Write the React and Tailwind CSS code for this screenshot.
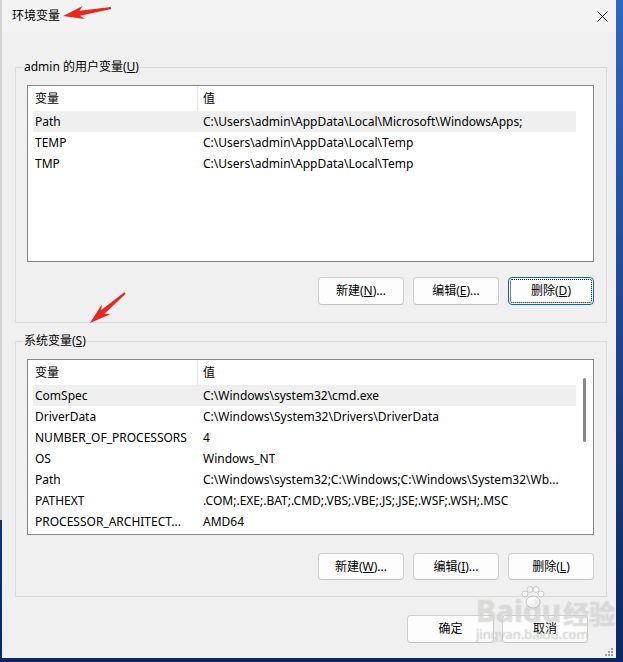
import React from "react";

function arrowPoints(tip, tail, headLen, headW, sw0, sw1) {
  const dx = tip[0] - tail[0];
  const dy = tip[1] - tail[1];
  const len = Math.hypot(dx, dy);
  const ux = dx / len;
  const uy = dy / len;
  const px = -uy;
  const py = ux;
  const bx = tip[0] - ux * headLen;
  const by = tip[1] - uy * headLen;
  const nb = 4;
  const pts = [
    [tip[0], tip[1]],
    [bx + px * headW - ux * nb, by + py * headW - uy * nb],
    [bx + px * sw0, by + py * sw0],
    [tail[0] + px * sw1, tail[1] + py * sw1],
    [tail[0] - px * sw1, tail[1] - py * sw1],
    [bx - px * sw0, by - py * sw0],
    [bx - px * headW - ux * nb, by - py * headW - uy * nb],
  ];
  return pts.map((p) => p[0].toFixed(1) + "," + p[1].toFixed(1)).join(" ");
}

function Btn({ children, focused, w = "w-[86px]", h = "h-[28px]" }) {
  return (
    <div
      className={
        "flex items-center justify-center rounded-[4px] bg-[#fdfdfd] " +
        w +
        " " +
        h +
        (focused
          ? " border border-[#0067c0] outline-1 outline-dotted outline-black outline-offset-[-3px]"
          : " border border-[#d0d0d0] border-b-[#c2c2c2]")
      }
    >
      <span className="leading-none">{children}</span>
    </div>
  );
}

function GroupBox({ legend, children }) {
  return (
    <div className="ml-[13px] w-[592px] h-[256px] border border-[#dcdcdc] flex flex-col">
      <span className="-mt-[9px] ml-[7px] self-start px-[1px] h-[16px] leading-[16px] bg-[#f0f0f0]">
        {legend}
      </span>
      {children}
    </div>
  );
}

function ListView({ rows, height, scroll }) {
  return (
    <div
      className={
        "ml-[11px] w-[567px] border border-[#868686] bg-white flex " + height
      }
    >
      <div className="flex flex-col w-[548px]">
        <div className="flex h-[25px] items-center">
          <div className="w-[169px] h-full flex items-center pl-[7px]">变量</div>
          <div className="w-px h-full bg-[#e5e5e5]" />
          <div className="pl-[5px]">值</div>
        </div>
        <div className="flex flex-col pl-[5px]">
          {rows.map((r, i) => (
            <div
              key={i}
              className={
                "flex h-[21px] items-center w-[543px] " +
                (i === 0 ? "bg-[#efefef]" : "")
              }
            >
              <div className="w-[164px] pl-[2px] whitespace-nowrap overflow-hidden">
                {r[0]}
              </div>
              <div className="pl-[6px] whitespace-nowrap overflow-hidden">
                {r[1]}
              </div>
            </div>
          ))}
        </div>
      </div>
      <div className="flex-1 flex flex-col items-center pt-[18px]">
        {scroll && <div className="w-[3px] h-[64px] rounded-full bg-[#8a8a8a]" />}
      </div>
    </div>
  );
}

export default function App() {
  const userRows = [
    ["Path", "C:\\Users\\admin\\AppData\\Local\\Microsoft\\WindowsApps;"],
    ["TEMP", "C:\\Users\\admin\\AppData\\Local\\Temp"],
    ["TMP", "C:\\Users\\admin\\AppData\\Local\\Temp"],
  ];
  const sysRows = [
    ["ComSpec", "C:\\Windows\\system32\\cmd.exe"],
    ["DriverData", "C:\\Windows\\System32\\Drivers\\DriverData"],
    ["NUMBER_OF_PROCESSORS", "4"],
    ["OS", "Windows_NT"],
    ["Path", "C:\\Windows\\system32;C:\\Windows;C:\\Windows\\System32\\Wb..."],
    ["PATHEXT", ".COM;.EXE;.BAT;.CMD;.VBS;.VBE;.JS;.JSE;.WSF;.WSH;.MSC"],
    ["PROCESSOR_ARCHITECT...", "AMD64"],
  ];

  return (
    <div className="relative w-[623px] h-[662px] flex bg-gradient-to-b from-[#2d66c8] to-[#0a2762] font-['Noto_Sans','Noto_Sans_CJK_SC',sans-serif] text-[12px] text-black overflow-hidden">
      <div className="w-[2px] flex flex-col">
        <div className="h-[520px] bg-[#d3d3d3]" />
      </div>
      <div className="relative w-[614px] h-[658px] bg-[#f0f0f0] flex flex-col">
        {/* title bar */}
        <div className="h-[32px] flex items-center justify-between pl-[10px] pr-[8px] bg-[#f3f3f3]">
          <span className="text-[12px]">环境变量</span>
          <svg width="11" height="11" viewBox="0 0 11 11" className="mt-[1px]">
            <path d="M0.5 0.5 L10.5 10.5 M10.5 0.5 L0.5 10.5" stroke="#1a1a1a" strokeWidth="1" />
          </svg>
        </div>

        <div className="mt-[35px]">
          <GroupBox
            legend={
              <>
                admin 的用户变量(<u>U</u>)
              </>
            }
          >
            <div className="mt-[10px]">
              <ListView rows={userRows} height="h-[177px]" />
            </div>
            <div className="mt-[15px] ml-[11px] w-[567px] flex justify-end gap-[9px]">
              <Btn>
                新建(<u>N</u>)...
              </Btn>
              <Btn>
                编辑(<u>E</u>)...
              </Btn>
              <Btn focused>
                删除(<u>D</u>)
              </Btn>
            </div>
          </GroupBox>
        </div>

        <div className="mt-[18px]">
          <GroupBox
            legend={
              <>
                系统变量(<u>S</u>)
              </>
            }
          >
            <div className="mt-[10px]">
              <ListView rows={sysRows} height="h-[176px]" scroll />
            </div>
            <div className="mt-[18px] ml-[11px] w-[567px] flex justify-end gap-[9px]">
              <Btn h="h-[27px]">
                新建(<u>W</u>)...
              </Btn>
              <Btn h="h-[27px]">
                编辑(<u>I</u>)...
              </Btn>
              <Btn h="h-[27px]">
                删除(<u>L</u>)
              </Btn>
            </div>
          </GroupBox>
        </div>

        <div className="mt-[18px] flex justify-end gap-[8px] pr-[28px]">
          <Btn w="w-[87px]">确定</Btn>
          <Btn w="w-[86px]">取消</Btn>
        </div>

        {/* size grip */}
        <svg className="absolute right-[3px] bottom-[2px]" width="9" height="9" viewBox="0 0 9 9">
          <rect x="7" y="1" width="2" height="2" fill="#a0a0a0" />
          <rect x="4" y="4" width="2" height="2" fill="#a0a0a0" />
          <rect x="7" y="4" width="2" height="2" fill="#a0a0a0" />
          <rect x="1" y="7" width="2" height="2" fill="#a0a0a0" />
          <rect x="4" y="7" width="2" height="2" fill="#a0a0a0" />
          <rect x="7" y="7" width="2" height="2" fill="#a0a0a0" />
        </svg>
      </div>

      {/* watermark */}
      <div className="absolute left-[476px] top-[596px] flex flex-col pointer-events-none select-none">
        <div className="flex items-end leading-none text-[30px] font-bold text-white/50 [text-shadow:0_0_1px_rgba(120,120,120,0.5)]">
          <span>Bai</span>
          <span className="relative">
            du
            <svg className="absolute -top-[10px] left-[-4px]" width="28" height="26" viewBox="0 0 28 26">
              <circle cx="6" cy="8" r="3" fill="rgba(255,255,255,0.5)" stroke="rgba(140,140,140,0.4)" />
              <circle cx="11" cy="3.5" r="3" fill="rgba(255,255,255,0.5)" stroke="rgba(140,140,140,0.4)" />
              <circle cx="17" cy="3.5" r="3" fill="rgba(255,255,255,0.5)" stroke="rgba(140,140,140,0.4)" />
              <circle cx="22" cy="8" r="3" fill="rgba(255,255,255,0.5)" stroke="rgba(140,140,140,0.4)" />
              <ellipse cx="14" cy="16" rx="7" ry="6" fill="rgba(255,255,255,0.5)" stroke="rgba(140,140,140,0.4)" />
            </svg>
          </span>
          <span className="ml-[2px] text-[26px] font-['Noto_Sans_CJK_SC',sans-serif]">经验</span>
        </div>
        <span className="mt-[2px] text-[13px] leading-none text-white/50 [text-shadow:0_0_1px_rgba(120,120,120,0.6)]">
          jingyan.baidu.com
        </span>
      </div>

      {/* red arrows */}
      <svg className="absolute inset-0 pointer-events-none" width="623" height="662">
        <polygon points={arrowPoints([63, 16], [111, 8], 17, 6.5, 2.5, 1)} fill="#e8281f" />
        <polygon points={arrowPoints([90, 323], [125, 293], 17, 6.5, 2.5, 1)} fill="#e8281f" />
      </svg>
    </div>
  );
}
